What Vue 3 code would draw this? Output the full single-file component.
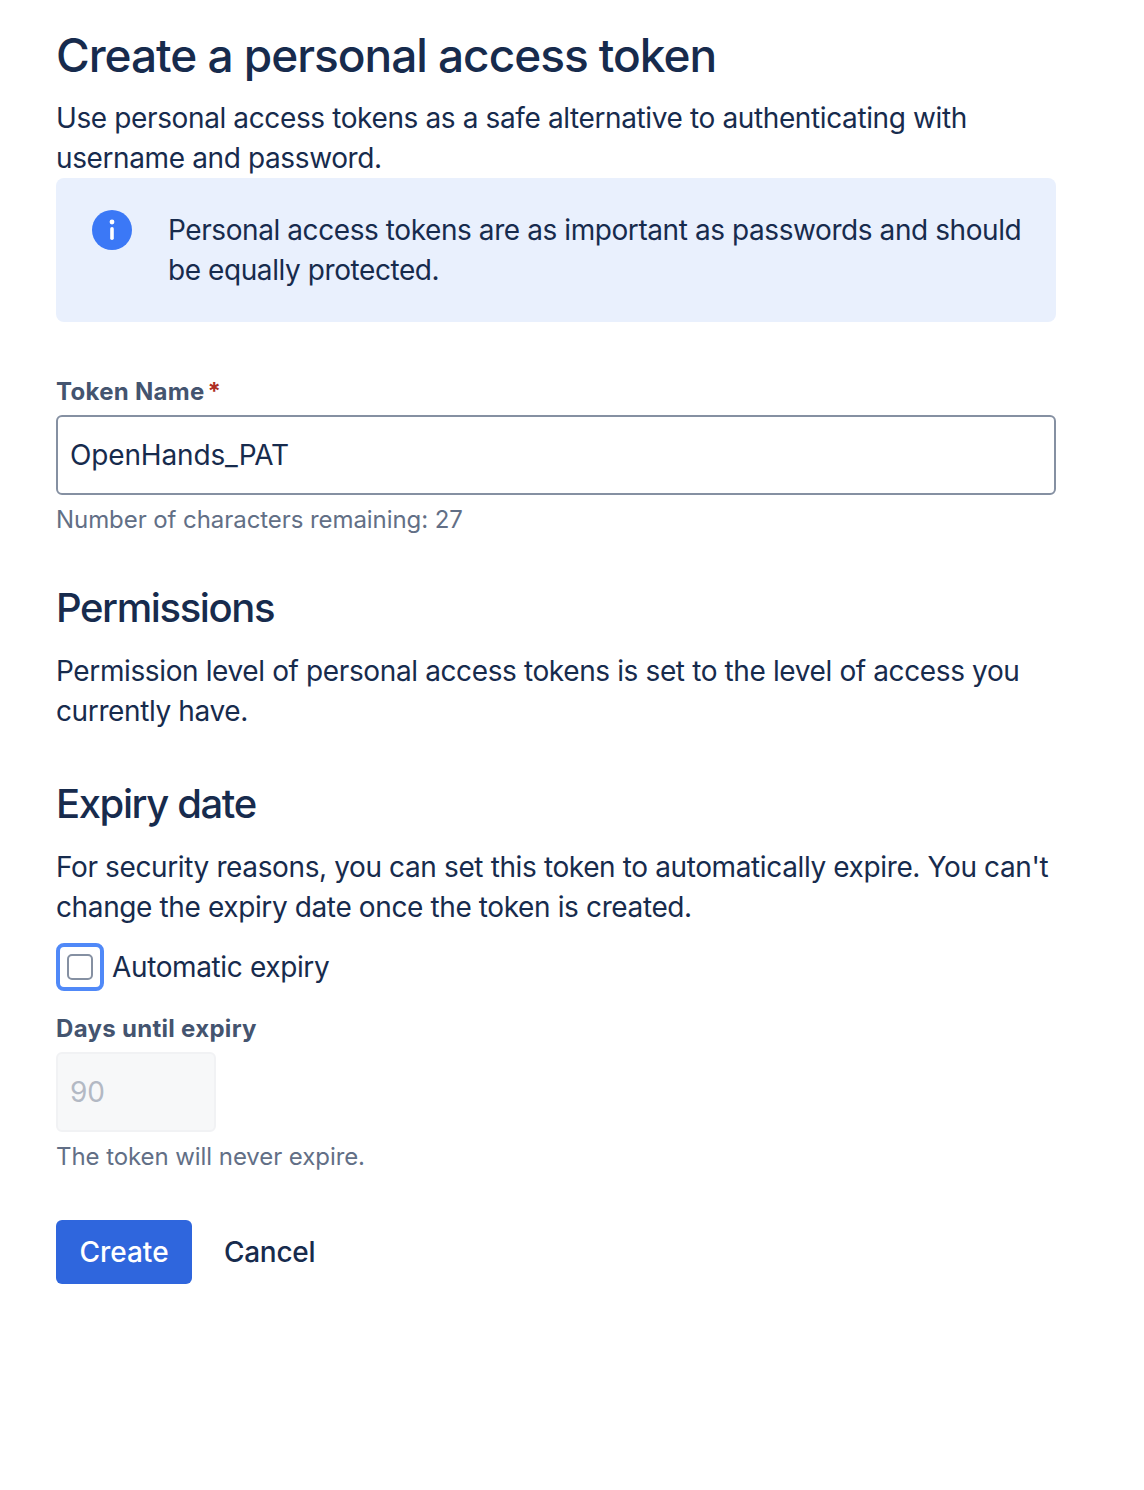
<script setup>
const tokenName = 'OpenHands_PAT'
const remaining = 27
</script>

<template>
  <div class="page">
    <h1 class="title">Create a personal access token</h1>
    <p class="text">Use personal access tokens as a safe alternative to authenticating with username and password.</p>

    <div class="notice">
      <svg class="notice-icon" viewBox="0 0 40 40" width="40" height="40">
        <circle cx="20" cy="20" r="20" fill="#3b78f6" />
        <circle cx="20" cy="12" r="2.4" fill="#fff" />
        <rect x="18.2" y="17" width="3.6" height="13" rx="1.8" fill="#fff" />
      </svg>
      <p class="text notice-text">Personal access tokens are as important as passwords and should be equally protected.</p>
    </div>

    <label class="label name-label">Token Name<span class="required">*</span></label>
    <input class="field" type="text" :value="tokenName" />
    <div class="help">Number of characters remaining: {{ remaining }}</div>

    <h2 class="section section-permissions">Permissions</h2>
    <p class="text">Permission level of personal access tokens is set to the level of access you currently have.</p>

    <h2 class="section section-expiry">Expiry date</h2>
    <p class="text">For security reasons, you can set this token to automatically expire. You can't change the expiry date once the token is created.</p>

    <div class="check-row">
      <span class="check-focus"><span class="check-box"></span></span>
      <span class="check-label">Automatic expiry</span>
    </div>

    <label class="label days-label">Days until expiry</label>
    <input class="field field-days" type="text" value="90" disabled />
    <div class="help">The token will never expire.</div>

    <div class="actions">
      <button class="btn-primary">Create</button>
      <button class="btn-link">Cancel</button>
    </div>
  </div>
</template>

<style scoped>
.page {
  box-sizing: border-box;
  width: 1144px;
  height: 1490px;
  padding: 27px 88px 0 56px;
  background: #fff;
  font-family: Inter, "Liberation Sans", sans-serif;
  color: #172b4d;
}

.title {
  margin: 0 0 15px;
  font-size: 46px;
  line-height: 56px;
  font-weight: 500;
  letter-spacing: -1.03px;
  color: #172b4d;
}

.text {
  margin: 0;
  font-size: 28px;
  line-height: 40px;
  font-weight: 400;
  letter-spacing: -0.38px;
  color: #172b4d;
}

.notice {
  display: flex;
  gap: 36px;
  padding: 32px 28px 32px 36px;
  background: #e9f0fd;
  border-radius: 8px;
}

.notice-icon {
  flex: none;
}

.notice-text {
  letter-spacing: -0.42px;
}

.label {
  display: block;
  font-size: 24px;
  line-height: 32px;
  font-weight: 700;
  letter-spacing: 0.3px;
  color: #44546f;
}

.name-label {
  margin-top: 54px;
}

.required {
  margin-left: 3px;
  letter-spacing: 0;
  color: #ae2e24;
}

.field {
  display: block;
  box-sizing: border-box;
  width: 1000px;
  height: 80px;
  margin-top: 7px;
  padding: 0 12px;
  border: 2px solid #8590a2;
  border-radius: 6px;
  background: #fff;
  font: 400 28px Inter, "Liberation Sans", sans-serif;
  letter-spacing: -0.15px;
  color: #172b4d;
  outline: none;
}

.field-days {
  width: 160px;
  border-color: #f1f2f4;
  background: #f7f8f9;
  color: #b3b9c4;
  -webkit-text-fill-color: #b3b9c4;
  opacity: 1;
}

.help {
  margin-top: 9px;
  font-size: 24px;
  line-height: 32px;
  letter-spacing: -0.07px;
  color: #626f86;
}

.section {
  margin: 0 0 19px;
  font-size: 40px;
  line-height: 48px;
  font-weight: 500;
  letter-spacing: -1.4px;
  color: #172b4d;
}

.section-permissions {
  margin-top: 48px;
}

.section-expiry {
  margin-top: 49px;
}

.check-row {
  display: flex;
  align-items: center;
  gap: 8px;
  margin-top: 16px;
}

.check-focus {
  display: flex;
  align-items: center;
  justify-content: center;
  box-sizing: border-box;
  width: 48px;
  height: 48px;
  border: 4px solid #5089f8;
  border-radius: 8px;
}

.check-box {
  box-sizing: border-box;
  width: 26px;
  height: 26px;
  border: 2px solid #8590a2;
  border-radius: 5px;
}

.check-label {
  font-size: 28px;
  line-height: 40px;
  letter-spacing: -0.37px;
}

.days-label {
  margin-top: 22px;
}

.actions {
  display: flex;
  align-items: center;
  gap: 8px;
  margin-top: 47px;
}

.btn-primary {
  width: 136px;
  height: 64px;
  border: 0;
  border-radius: 6px;
  background: #2f66dd;
  color: #fff;
  font: 500 28px Inter, "Liberation Sans", sans-serif;
}

.btn-link {
  height: 64px;
  padding: 0 24px;
  border: 0;
  background: none;
  color: #172b4d;
  font: 500 28px Inter, "Liberation Sans", sans-serif;
  letter-spacing: -0.3px;
}
</style>
